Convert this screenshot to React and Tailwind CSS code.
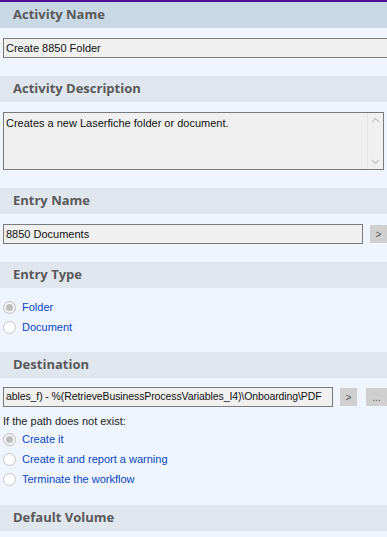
const Header = ({ title, first = false }) => (
  <div
    className={`h-[26px] flex items-center pl-[13px] font-bold text-[13px] text-[#595959] ${
      first ? 'bg-[#c8d8e4]' : 'bg-[#dfe6ee]'
    }`}
    style={{ fontFamily: '"Open Sans", sans-serif' }}
  >
    {title}
  </div>
)

const Radio = ({ label, checked = false }) => (
  <div className="flex items-center h-[20px] pl-[3px]">
    <div
      className={`w-[13px] h-[13px] rounded-full border flex items-center justify-center ${
        checked ? 'border-[#bcbcbc] bg-[#f4f4f4]' : 'border-[#c4c4c4] bg-white'
      }`}
    >
      {checked && <div className="w-[7px] h-[7px] rounded-full bg-[#bdbdbd]"></div>}
    </div>
    <span className="ml-[6px] text-[#0a45c0]">{label}</span>
  </div>
)

const SmallButton = ({ label, className = '' }) => (
  <div
    className={`h-[18px] bg-[#cfcfcf] flex items-center justify-center text-[10px] text-[#555] ${className}`}
  >
    {label}
  </div>
)

export default function App() {
  return (
    <div
      className="w-[387px] h-[537px] overflow-hidden bg-[#eef5fe] text-[11px] text-[#111]"
      style={{ fontFamily: '"Liberation Sans", Arial, sans-serif' }}
    >
      <div className="h-[2px] bg-[#4a1096]"></div>
      <Header title="Activity Name" first />
      <div className="pt-[10px] pb-[18px] pl-[3px]">
        <div className="h-[20px] border border-[#7a7a7a] border-r-0 bg-[#f0f0f0] flex items-center pl-[2px]">
          Create 8850 Folder
        </div>
      </div>

      <Header title="Activity Description" />
      <div className="pt-[10px] pb-[18px] px-[3px]">
        <div className="h-[58px] border border-[#7a7a7a] bg-[#f0f0f0] flex">
          <div className="flex-1 pl-[2px] pt-[2px]">Creates a new Laserfiche folder or document.</div>
          <div className="w-[16px] border-l border-[#e4e4e4] flex flex-col justify-between items-center py-[4px]">
            <svg width="9" height="6" viewBox="0 0 9 6">
              <path d="M1 5 L4.5 1.5 L8 5" fill="none" stroke="#c2c2c2" strokeWidth="1.2" />
            </svg>
            <svg width="9" height="6" viewBox="0 0 9 6">
              <path d="M1 1 L4.5 4.5 L8 1" fill="none" stroke="#c2c2c2" strokeWidth="1.2" />
            </svg>
          </div>
        </div>
      </div>

      <Header title="Entry Name" />
      <div className="pt-[10px] pb-[18px] pl-[3px] flex items-center">
        <div className="w-[360px] h-[20px] border border-[#7a7a7a] bg-[#f0f0f0] flex items-center pl-[2px]">
          8850 Documents
        </div>
        <SmallButton label=">" className="ml-[7px] w-[17px]" />
      </div>

      <Header title="Entry Type" />
      <div className="pt-[9px] pb-[15px]">
        <Radio label="Folder" checked />
        <Radio label="Document" />
      </div>

      <Header title="Destination" />
      <div className="pt-[9px] pl-[3px] flex items-center">
        <div className="w-[330px] h-[20px] border border-[#7a7a7a] bg-[#f0f0f0] flex items-center overflow-hidden whitespace-nowrap pl-[2px] text-[10.5px] tracking-[-0.1px]">
          ables_f) - %(RetrieveBusinessProcessVariables_I4)\Onboarding\PDF
        </div>
        <SmallButton label=">" className="ml-[7px] w-[17px]" />
        <SmallButton label="..." className="ml-[9px] flex-1" />
      </div>
      <div className="pl-[3px] pt-[6px] h-[22px] text-[#222]">If the path does not exist:</div>
      <div className="pb-[16px]">
        <Radio label="Create it" checked />
        <Radio label="Create it and report a warning" />
        <Radio label="Terminate the workflow" />
      </div>

      <Header title="Default Volume" />
    </div>
  )
}
